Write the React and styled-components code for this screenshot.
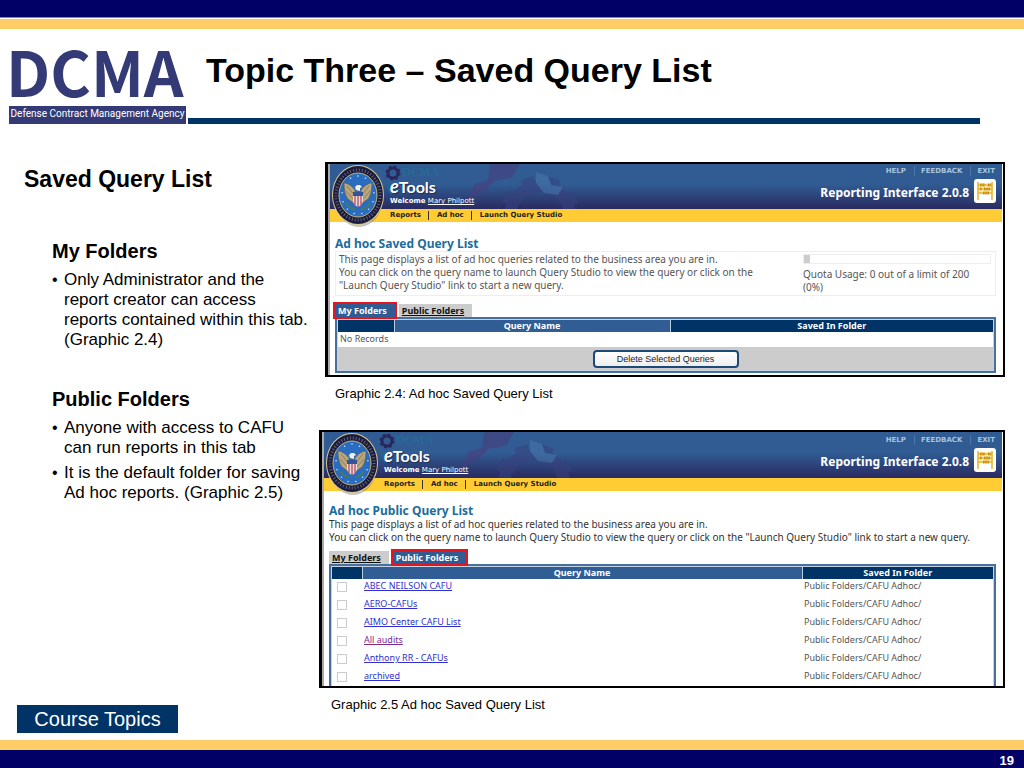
import styled, { createGlobalStyle, css } from "styled-components";

const GlobalStyle = createGlobalStyle`
  * {
    box-sizing: border-box;
  }
  body {
    margin: 0;
    background: #fff;
    color: #000;
    font-family: "Liberation Sans", Arial, sans-serif;
  }
  h1, h2, h3, p, ul, figure {
    margin: 0;
    padding: 0;
  }
`;

const Page = styled.div`
  min-height: 100vh;
  display: flex;
  flex-direction: column;
`;

const TopBars = styled.div`
  height: 29px;
  background: #ffcc66;
  border-top: 17px solid #000066;
  box-shadow: inset 0 1px #8a84a8, inset 0 2px #fff;
`;

const Header = styled.header`
  display: flex;
  align-items: flex-end;
  padding: 5px 44px 0 9px;
  gap: 2px;
`;

const Logo = styled.div`
  flex: none;
  width: 177px;
`;

const LogoName = styled.div`
  font-family: "Noto Sans CJK JP", "Noto Sans", sans-serif;
  font-size: 62px;
  font-weight: 700;
  line-height: 72px;
  margin-left: -3px;
  color: #333a76;
  white-space: nowrap;
`;

const LogoTag = styled.div`
  height: 18px;
  background: #333a76;
  color: #fff;
  font-family: Roboto, sans-serif;
  font-size: 10px;
  line-height: 16px;
  text-align: center;
  white-space: nowrap;
`;

const TitleBox = styled.div`
  flex: 1;
  border-bottom: 6px solid #003366;
  padding: 0 0 28px 18px;
`;

const Title = styled.h1`
  font-size: 34px;
  line-height: 40px;
`;

const Main = styled.main`
  flex: 1;
  display: flex;
  justify-content: space-between;
  padding: 38px 19px 7px 17px;
`;

const Notes = styled.section`
  width: 296px;
  flex: none;
  display: flex;
  flex-direction: column;
  align-items: flex-start;
`;

const NotesTitle = styled.h2`
  padding: 4px 0 0 7px;
  font-size: 23px;
  line-height: 26px;
`;

const Topic = styled.div`
  margin: ${(props) => props.$gap}px 0 0 35px;
`;

const TopicTitle = styled.h3`
  font-size: 20px;
  line-height: 24px;
`;

const BulletList = styled.ul`
  list-style: none;
  padding-top: 2px;
`;

const Bullet = styled.li`
  position: relative;
  margin-top: 5px;
  padding-left: 12px;
  font-size: 17px;
  line-height: 20px;
  &:before {
    content: "•";
    position: absolute;
    left: 0;
    font-size: 16px;
  }
`;

const CourseButton = styled.button`
  margin-top: auto;
  width: 161px;
  height: 28px;
  padding: 0;
  border: 0;
  background: #003366;
  color: #fff;
  font-family: inherit;
  font-size: 20px;
  cursor: pointer;
`;

const Figures = styled.section`
  flex: 1;
  max-width: 686px;
  min-width: 0;
  display: flex;
  flex-direction: column;
  align-items: flex-end;
  gap: 27px;
`;

const Figure = styled.figure`
  width: ${(props) => (props.$narrow ? "calc(100% - 6px)" : "100%")};
`;

const Caption = styled.figcaption`
  padding: 8px 0 0 ${(props) => props.$indent}px;
  font-size: 13px;
  line-height: 18px;
`;

const Frame = styled.div`
  height: ${(props) => props.$height}px;
  overflow: hidden;
  border: 2px solid #000;
  border-left-width: 3px;
  padding: 0 1px 0 2px;
  background: linear-gradient(90deg, #aaa 2px, #fff 2px);
  font-family: "Noto Sans", Tahoma, sans-serif;
`;

const Banner = styled.div`
  position: relative;
  height: ${(props) => props.$height}px;
  background: linear-gradient(#305c93 0%, #305c93 45%, #2a2a60 100%);
  color: #fff;
  display: flex;
  justify-content: space-between;
  align-items: flex-end;
`;

const GearArt = styled.svg`
  position: absolute;
  left: 0;
  top: 0;
  width: 300px;
  height: 100%;
`;

const Seal = styled.svg`
  position: absolute;
  left: 1px;
  top: 0;
  width: 54px;
  height: 64px;
  z-index: 1;
`;

const Brand = styled.div`
  position: relative;
  padding: 0 0 3px 60px;
`;

const BrandName = styled.div`
  font-family: Lato, sans-serif;
  font-size: 16px;
  font-weight: 700;
  line-height: 19px;
  text-shadow: 1px 1px 1px #1c2c58;
  em {
    font-size: 18px;
  }
`;

const Welcome = styled.div`
  font-family: "DejaVu Sans", Verdana, sans-serif;
  font-size: 7px;
  line-height: 10px;
  a {
    color: inherit;
  }
`;

const BannerRight = styled.div`
  position: relative;
  padding: 0 6px 2px 0;
  display: flex;
  flex-direction: column;
  align-items: flex-end;
`;

const HelpLinks = styled.nav`
  display: flex;
  padding-right: 1px;
  font-family: "DejaVu Sans", Verdana, sans-serif;
  font-size: 7px;
  font-weight: 700;
  line-height: 10px;
  a {
    color: #a9c3de;
    text-decoration: none;
  }
  a + a {
    margin-left: 8px;
    padding-left: 6px;
    border-left: 1px solid #4a76a8;
  }
`;

const Product = styled.div`
  display: flex;
  gap: 5px;
  margin-top: 3px;
  font-size: 12px;
  font-weight: 700;
  line-height: 28px;
  svg {
    width: 22px;
    height: 24px;
  }
`;

const Menu = styled.nav`
  height: 13px;
  padding-left: 60px;
  display: flex;
  align-items: center;
  background: #ffcc33;
  font-family: "DejaVu Sans", Verdana, sans-serif;
  font-size: 7px;
  font-weight: 700;
  line-height: 9px;
  a {
    color: #222;
    text-decoration: none;
  }
  a + a {
    margin-left: 7px;
    padding-left: 8px;
    border-left: 1px solid #333;
  }
`;

const Body = styled.div`
  padding: ${(props) => props.$top}px 6px 0 5px;
`;

const ListTitle = styled.h2`
  color: #1c6c9c;
  font-size: 12px;
  line-height: 14px;
`;

const Intro = styled.p`
  font-size: 10px;
  line-height: 13px;
  color: ${(props) => props.$color || "#555"};
`;

const InfoBox = styled.div`
  display: flex;
  justify-content: space-between;
  height: 45px;
  padding: 1px 4px 0 3px;
  border: 1px solid #eee;
`;

const IntroColumn = styled.div`
  width: 430px;
`;

const Quota = styled.div`
  width: 188px;
  font-size: 10px;
  line-height: 13px;
  color: #555;
`;

const QuotaTrack = styled.div`
  height: 10px;
  margin: 1px 0 4px;
  border: 1px solid #eee;
`;

const QuotaFill = styled.div`
  width: 6px;
  height: 8px;
  background: #ccc;
`;

const Tabs = styled.div`
  display: flex;
  gap: 4px;
  margin-top: ${(props) => props.$top}px;
  height: 13px;
`;

const Tab = styled.a`
  position: relative;
  height: 13px;
  padding: 0 8px 0 3px;
  background: #ccc;
  color: #111;
  font-size: 9px;
  font-weight: 700;
  line-height: 13px;
  ${(props) =>
    props.$active &&
    css`
      background: #305c93;
      color: #fff;
      text-decoration: none;
      outline: 2px solid #e8141c;
      z-index: 1;
    `}
`;

const TableFrame = styled.div`
  border: 2px solid #48709f;
  outline: 1px solid #c3d3e4;
  outline-offset: -3px;
  padding: 1px;
  background: #fff;
`;

const Table = styled.table`
  width: 100%;
  table-layout: fixed;
  border-collapse: collapse;
  font-size: 9px;
  color: #555;
`;

const HeadCell = styled.th`
  width: ${(props) => (props.$width ? `${props.$width}px` : "auto")};
  height: 12px;
  padding: 0;
  background: ${(props) => (props.$dark ? "#003366" : "#305e94")};
  border-right: 1px solid #b9cbe0;
  color: #fff;
  line-height: 12px;
  &:last-child {
    border-right: 0;
  }
`;

const Cell = styled.td`
  height: ${(props) => props.$height || 18}px;
  padding: 0 2px;
  line-height: 14px;
  vertical-align: top;
`;

const QueryLink = styled.a`
  color: ${(props) => (props.$visited ? "#7d2a8c" : "#2f2fd0")};
`;

const Check = styled.input`
  appearance: none;
  display: block;
  width: 10px;
  height: 10px;
  margin: 3px 0 0 3px;
  border: 1px solid #ccc;
  background: #fff;
`;

const ButtonRow = styled.div`
  height: 23px;
  background: #ccc;
  display: flex;
  justify-content: center;
  align-items: center;
`;

const DeleteButton = styled.button`
  width: 146px;
  height: 18px;
  padding: 0;
  border: 2px solid #1c4a78;
  border-radius: 4px;
  background: linear-gradient(#fff, #eee);
  color: #222;
  font-family: "Liberation Sans", Arial, sans-serif;
  font-size: 9px;
`;

const Footer = styled.footer`
  height: 28px;
  border-top: 10px solid #ffcc66;
  background: #000066;
  color: #fff;
  padding-right: 10px;
  font-size: 13px;
  font-weight: 700;
  line-height: 22px;
  text-align: right;
`;

const queries = [
  { name: "ABEC NEILSON CAFU" },
  { name: "AERO-CAFUs" },
  { name: "AIMO Center CAFU List" },
  { name: "All audits", visited: true },
  { name: "Anthony RR - CAFUs" },
  { name: "archived" },
];

function Gear({ x, y, r, color, width, teeth = 8 }) {
  const tooth = (Math.PI * 2 * (r + width / 2)) / (teeth * 2);
  return (
    <g fill="none" stroke={color}>
      <circle cx={x} cy={y} r={r} strokeWidth={width} />
      <circle
        cx={x}
        cy={y}
        r={r + width / 2}
        strokeWidth={width * 0.7}
        strokeDasharray={tooth}
      />
    </g>
  );
}

function BannerArt() {
  return (
    <GearArt aria-hidden="true">
      <g opacity=".55">
        <Gear x={210} y={52} r={30} color="#39417f" width={12} teeth={9} />
        <path d="M138 36l6-16 14-4 2-16h30l-8 14-18 3-8 9z" fill="#4b3d7c" />
        <path d="M206 8l12 4 3 9 12 2-5 8-14-2-8-10z" fill="#4a75ad" />
      </g>
      <Gear x={63} y={9} r={5} color="#29285c" width={3} />
      <path d="M56 23l10-4 4 7-9 5z" fill="#25638b" />
      <text
        x="72"
        y="12"
        fill="#276a94"
        fontFamily="Liberation Serif, serif"
        fontSize="12"
        fontWeight="700"
      >
        DCMA
      </text>
    </GearArt>
  );
}

function AgencySeal() {
  const stars = Array.from({ length: 13 }, (_, i) => (i * Math.PI * 2) / 13);
  return (
    <Seal viewBox="0 0 54 64" role="img" aria-label="Agency seal">
      <ellipse cx="28" cy="34" rx="24" ry="29" fill="#555" opacity=".35" />
      <ellipse cx="27" cy="31" rx="26" ry="30" fill="#d9c98a" />
      <ellipse cx="27" cy="31" rx="25" ry="29" fill="#191b43" />
      <ellipse
        cx="27"
        cy="31"
        rx="22"
        ry="25"
        fill="none"
        stroke="#8e8672"
        strokeWidth="3"
        strokeDasharray="1 2"
        opacity=".7"
      />
      <ellipse cx="27" cy="31" rx="19" ry="22" fill="#2a6dc0" stroke="#c9b878" />
      {stars.map((a) => (
        <circle
          key={a}
          cx={27 + Math.sin(a) * 16}
          cy={31 - Math.cos(a) * 19}
          r=".8"
          fill="#cfe6ff"
        />
      ))}
      <path
        d="M24 26c-4-5-8-7-11-7 0 7 1 12 4 16l7 5zM30 26c4-5 8-7 11-7 0 7-1 12-4 16l-7 5z"
        fill="#b9a77c"
        stroke="#66594c"
        strokeWidth=".7"
      />
      <path d="M16 22l8 10M15 27l8 9M38 22l-8 10M39 27l-8 9" stroke="#70604e" strokeWidth=".6" />
      <path d="M25 26l-1-3 2-2h3l2 2-2 1v3z" fill="#f4efe4" />
      <path d="M22 28h10v8c0 4-3 6-5 7-2-1-5-3-5-7z" fill="#e4dede" />
      <path d="M22 28h10v4H22z" fill="#34549a" />
      <path d="M24 32v9M27 32v11M30 32v9" stroke="#b63e50" strokeWidth="1.2" />
      <path d="M15 39c3 5 6 6 9 6M39 39c-3 5-6 6-9 6" fill="none" stroke="#477b5a" strokeWidth="2" />
    </Seal>
  );
}

function AbacusIcon() {
  return (
    <svg viewBox="0 0 22 24" aria-hidden="true">
      <rect width="22" height="24" rx="3" fill="#fff" />
      <path d="M3 4h16v11H3z" fill="#fff0bd" />
      <path
        d="M4 3v18M18 3v18M4 6h14M4 10h14M4 14h14"
        fill="none"
        stroke="#e8b22a"
        strokeWidth="1.5"
      />
      <path
        d="M6 6h5M14 6h3M6 10h2M10 10h6M9 14h6"
        stroke="#c98f10"
        strokeWidth="3"
        strokeDasharray="1.6 .6"
      />
    </svg>
  );
}

function AppHeader({ height }) {
  return (
    <>
      <Banner $height={height}>
        <BannerArt />
        <AgencySeal />
        <Brand>
          <BrandName>
            <em>e</em>Tools
          </BrandName>
          <Welcome>
            <b>Welcome</b> <a href="#user">Mary Philpott</a>
          </Welcome>
        </Brand>
        <BannerRight>
          <HelpLinks>
            <a href="#help">HELP</a>
            <a href="#feedback">FEEDBACK</a>
            <a href="#exit">EXIT</a>
          </HelpLinks>
          <Product>
            Reporting Interface 2.0.8 <AbacusIcon />
          </Product>
        </BannerRight>
      </Banner>
      <Menu>
        <a href="#reports">Reports</a>
        <a href="#adhoc">Ad hoc</a>
        <a href="#studio">Launch Query Studio</a>
      </Menu>
    </>
  );
}

function FolderTabs({ active, top }) {
  return (
    <Tabs $top={top}>
      {["My Folders", "Public Folders"].map((name) => (
        <Tab key={name} href="#folders" $active={name === active}>
          {name}
        </Tab>
      ))}
    </Tabs>
  );
}

function TableHead({ first, last }) {
  return (
    <thead>
      <tr>
        <HeadCell $dark $width={first} aria-label="Select" />
        <HeadCell>Query Name</HeadCell>
        <HeadCell $dark $width={last}>
          Saved In Folder
        </HeadCell>
      </tr>
    </thead>
  );
}

function SavedQueries() {
  return (
    <Frame $height={215}>
      <AppHeader height={45} />
      <Body $top={15}>
        <ListTitle>Ad hoc Saved Query List</ListTitle>
        <InfoBox>
          <IntroColumn>
            <Intro>
              This page displays a list of ad hoc queries related to the business area you are in.
            </Intro>
            <Intro>
              You can click on the query name to launch Query Studio to view the query or click on the
              "Launch Query Studio" link to start a new query.
            </Intro>
          </IntroColumn>
          <Quota>
            <QuotaTrack>
              <QuotaFill />
            </QuotaTrack>
            Quota Usage: 0 out of a limit of 200 (0%)
          </Quota>
        </InfoBox>
        <FolderTabs active="My Folders" top={8} />
        <TableFrame>
          <Table>
            <TableHead first={56} last={323} />
            <tbody>
              <tr>
                <Cell colSpan={3} $height={15}>
                  No Records
                </Cell>
              </tr>
            </tbody>
          </Table>
          <ButtonRow>
            <DeleteButton>Delete Selected Queries</DeleteButton>
          </ButtonRow>
        </TableFrame>
      </Body>
    </Frame>
  );
}

function PublicQueries() {
  return (
    <Frame $height={258}>
      <AppHeader height={46} />
      <Body $top={13}>
        <ListTitle>Ad hoc Public Query List</ListTitle>
        <Intro $color="#333">
          This page displays a list of ad hoc queries related to the business area you are in.
        </Intro>
        <Intro $color="#333">
          You can click on the query name to launch Query Studio to view the query or click on the
          "Launch Query Studio" link to start a new query.
        </Intro>
        <FolderTabs active="Public Folders" top={7} />
        <TableFrame>
          <Table>
            <TableHead first={30} last={191} />
            <tbody>
              {queries.map((query) => (
                <tr key={query.name}>
                  <Cell>
                    <Check type="checkbox" aria-label={query.name} />
                  </Cell>
                  <Cell>
                    <QueryLink href="#query" $visited={query.visited}>
                      {query.name}
                    </QueryLink>
                  </Cell>
                  <Cell>Public Folders/CAFU Adhoc/</Cell>
                </tr>
              ))}
            </tbody>
          </Table>
        </TableFrame>
      </Body>
    </Frame>
  );
}

export default function App() {
  return (
    <Page>
      <GlobalStyle />
      <TopBars />
      <Header>
        <Logo>
          <LogoName>DCMA</LogoName>
          <LogoTag>Defense Contract Management Agency</LogoTag>
        </Logo>
        <TitleBox>
          <Title>Topic Three – Saved Query List</Title>
        </TitleBox>
      </Header>
      <Main>
        <Notes>
          <NotesTitle>Saved Query List</NotesTitle>
          <Topic $gap={47}>
            <TopicTitle>My Folders</TopicTitle>
            <BulletList>
              <Bullet>
                Only Administrator and the report creator can access reports contained within this
                tab. (Graphic 2.4)
              </Bullet>
            </BulletList>
          </Topic>
          <Topic $gap={37}>
            <TopicTitle>Public Folders</TopicTitle>
            <BulletList>
              <Bullet>Anyone with access to CAFU can run reports in this tab</Bullet>
              <Bullet>It is the default folder for saving Ad hoc reports. (Graphic 2.5)</Bullet>
            </BulletList>
          </Topic>
          <CourseButton>Course Topics</CourseButton>
        </Notes>
        <Figures>
          <Figure $narrow>
            <SavedQueries />
            <Caption $indent={10}>Graphic 2.4: Ad hoc Saved Query List</Caption>
          </Figure>
          <Figure>
            <PublicQueries />
            <Caption $indent={12}>Graphic 2.5 Ad hoc Saved Query List</Caption>
          </Figure>
        </Figures>
      </Main>
      <Footer>19</Footer>
    </Page>
  );
}
